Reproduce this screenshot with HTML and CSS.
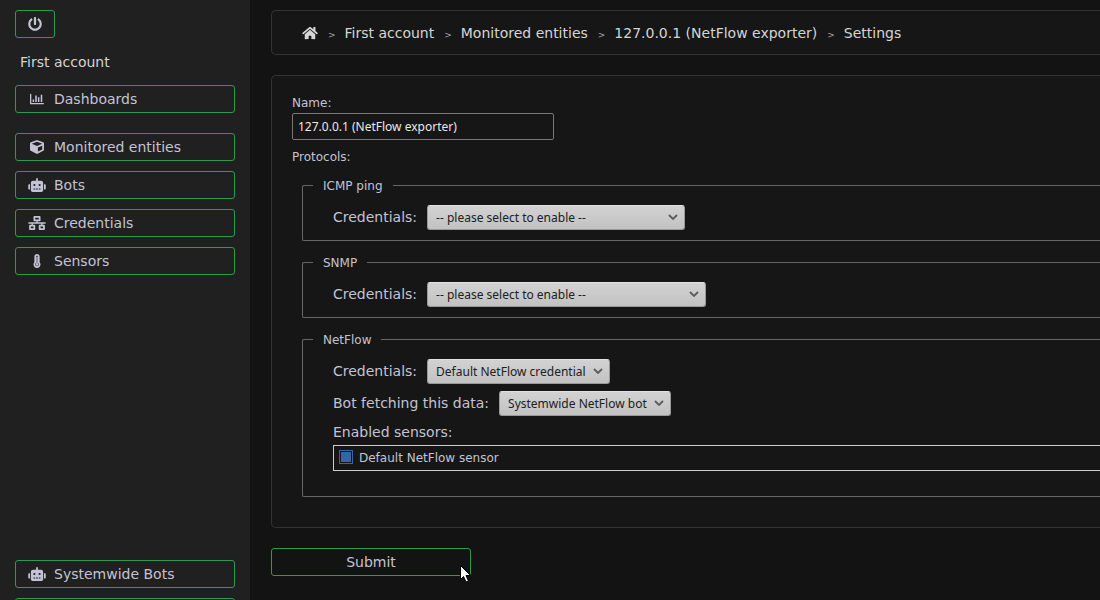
FILE: index.html
```
<!DOCTYPE html>
<html lang="en">
<head>
<meta charset="utf-8">
<title>Settings</title>
<link rel="stylesheet" href="styles.css">
</head>
<body>
<svg class="symbols" aria-hidden="true">
  <symbol id="robot" viewBox="0 0 640 512"><path d="M32,224H64V416H32A32,32,0,0,1,0,384V256A32,32,0,0,1,32,224Zm512-48V448a64,64,0,0,1-64,64H160a64,64,0,0,1-64-64V176a80,80,0,0,1,80-80H288V32a32,32,0,0,1,64,0V96H464A80,80,0,0,1,544,176ZM264,256a40,40,0,1,0-40,40A40,40,0,0,0,264,256Zm-8,128H192v32h64Zm96,0H288v32h64ZM456,256a40,40,0,1,0-40,40A40,40,0,0,0,456,256Zm-8,128H384v32h64ZM640,256V384a32,32,0,0,1-32,32H576V224h32A32,32,0,0,1,640,256Z"/></symbol>
  <symbol id="chevron" viewBox="0 0 10 6"><path d="M1 1l4 4 4-4" fill="none" stroke="#5c5c5c" stroke-width="1.8"/></symbol>
</svg>
<div class="app">
  <aside class="sidebar">
    <button class="button power" type="button"><svg class="icon" viewBox="0 0 512 512"><path d="M400 54.1c63 45 104 118.6 104 201.9 0 136.8-110.8 247.7-247.5 248C120 504.3 8.2 393 8 256.4 7.9 173.1 48.9 99.3 111.8 54.2c11.7-8.3 28-4.8 35 7.7L162.6 90c5.9 10.5 3.1 23.8-6.6 31-41.5 30.8-68 79.6-68 134.9-.1 92.3 74.5 168.1 168 168.1 91.6 0 168.6-74.2 168-169.1-.3-51.8-24.7-101.8-68.1-134-9.7-7.2-12.4-20.5-6.5-30.9l15.8-28.1c7-12.4 23.2-16.1 34.8-7.8zM296 264V24c0-13.3-10.7-24-24-24h-32c-13.3 0-24 10.7-24 24v240c0 13.3 10.7 24 24 24h32c13.3 0 24-10.7 24-24z"/></svg></button>
    <a class="account" href="#">First account</a>
    <nav class="menu">
      <a class="button first" href="#"><svg class="icon" viewBox="0 0 512 512"><path d="M0 80q0-16 16-16h16q16 0 16 16v320h448q16 0 16 16v16q0 16-16 16H32q-32 0-32-32zM96 272h56v96H96zM192 128h56v240h-56zM288 192h56v176h-56zM392 96h56v272h-56z"/></svg>Dashboards</a>
      <a class="button" href="#"><svg class="icon" viewBox="0 0 512 512"><path d="M239.1 6.3l-208 78c-18.7 7-31.1 25-31.1 45v225.1c0 18.2 10.3 34.8 26.5 42.9l208 104c13.5 6.8 29.4 6.8 42.9 0l208-104c16.3-8.1 26.5-24.8 26.5-42.9V129.3c0-20-12.4-37.9-31.1-44.9l-208-78C262 2.2 250 2.2 239.1 6.3zM256 68.4l192 72v1.1l-192 78-192-78v-1.1l192-72zm32 356V275.5l160-65v133.9l-160 80z"/></svg>Monitored entities</a>
      <a class="button" href="#"><svg class="icon"><use href="#robot"/></svg>Bots</a>
      <a class="button" href="#"><svg class="icon" viewBox="0 0 640 512"><path d="M640 264v-16c0-8.84-7.16-16-16-16H344v-40h72c17.67 0 32-14.33 32-32V32c0-17.67-14.33-32-32-32H224c-17.67 0-32 14.33-32 32v128c0 17.67 14.33 32 32 32h72v40H16c-8.84 0-16 7.16-16 16v16c0 8.84 7.16 16 16 16h104v40H64c-17.67 0-32 14.33-32 32v128c0 17.67 14.33 32 32 32h160c17.67 0 32-14.33 32-32V352c0-17.67-14.33-32-32-32h-56v-40h304v40h-56c-17.67 0-32 14.33-32 32v128c0 17.67 14.33 32 32 32h160c17.67 0 32-14.33 32-32V352c0-17.67-14.33-32-32-32h-56v-40h104c8.84 0 16-7.16 16-16zM256 128V64h128v64H256zm-64 320H96v-64h96v64zm352 0h-96v-64h96v64z"/></svg>Credentials</a>
      <a class="button" href="#"><svg class="icon" viewBox="0 0 256 512"><path fill-rule="evenodd" d="M224 96C224 43 181 0 128 0S32 43 32 96v203C12 321 0 351 0 384c0 71 57 128 128 128s128-57 128-128c0-33-12-63-32-85zM128 448c-35 0-64-29-64-64 0-20 12-42 32-60V96a32 32 0 0 1 64 0v228c20 18 32 40 32 60 0 35-29 64-64 64z"/><path d="M104 96h48v242a48 48 0 1 1-48 0z"/></svg>Sensors</a>
    </nav>
    <nav class="menu system">
      <a class="button" href="#"><svg class="icon"><use href="#robot"/></svg>Systemwide Bots</a>
      <a class="button" href="#"></a>
    </nav>
  </aside>
  <main class="content">
    <nav class="panel breadcrumbs">
      <a class="home" href="#"><svg class="home-icon" viewBox="0 0 576 512"><path d="M280.37 148.26L96 300.11V464a16 16 0 0 0 16 16l112.06-.29a16 16 0 0 0 15.92-16V368a16 16 0 0 1 16-16h64a16 16 0 0 1 16 16v95.64a16 16 0 0 0 16 16.05L464 480a16 16 0 0 0 16-16V300L295.67 148.26a12.19 12.19 0 0 0-15.3 0zM571.6 251.47L488 182.56V44.05a12 12 0 0 0-12-12h-56a12 12 0 0 0-12 12v72.61L318.47 43a48 48 0 0 0-61 0L4.34 251.47a12 12 0 0 0-1.6 16.9l25.5 31A12 12 0 0 0 45.15 301l235.22-193.74a12.19 12.19 0 0 1 15.3 0L530.9 301a12 12 0 0 0 16.9-1.6l25.5-31a12 12 0 0 0-1.7-16.93z"/></svg></a>
      <span class="separator">&gt;</span><a href="#">First account</a>
      <span class="separator">&gt;</span><a href="#">Monitored entities</a>
      <span class="separator">&gt;</span><a href="#">127.0.0.1 (NetFlow exporter)</a>
      <span class="separator">&gt;</span><a href="#">Settings</a>
    </nav>
    <form class="settings">
      <div class="panel fields">
        <label class="caption" for="name">Name:</label>
        <input class="text" id="name" type="text" value="127.0.0.1 (NetFlow exporter)">
        <div class="caption protocols">Protocols:</div>
        <fieldset class="group">
          <legend>ICMP ping</legend>
          <div class="row"><label for="icmp">Credentials:</label><span class="picker wide"><select id="icmp"><option>-- please select to enable --</option></select><svg class="chevron"><use href="#chevron"/></svg></span></div>
        </fieldset>
        <fieldset class="group">
          <legend>SNMP</legend>
          <div class="row"><label for="snmp">Credentials:</label><span class="picker wider"><select id="snmp"><option>-- please select to enable --</option></select><svg class="chevron"><use href="#chevron"/></svg></span></div>
        </fieldset>
        <fieldset class="group netflow">
          <legend>NetFlow</legend>
          <div class="row"><label for="netflow">Credentials:</label><span class="picker"><select id="netflow"><option>Default NetFlow credential</option></select><svg class="chevron"><use href="#chevron"/></svg></span></div>
          <div class="row"><label for="bot">Bot fetching this data:</label><span class="picker"><select id="bot"><option>Systemwide NetFlow bot</option></select><svg class="chevron"><use href="#chevron"/></svg></span></div>
          <div class="sensors-title">Enabled sensors:</div>
          <label class="sensor"><input type="checkbox" checked>Default NetFlow sensor</label>
        </fieldset>
      </div>
      <div class="actions">
        <button class="button submit" type="button">Submit</button>
        <svg class="pointer" viewBox="0 0 11 18"><path d="M.5 .5v14l3-3 2.5 5.500 2.500-1-2.500-5.500h4.500z" fill="#fff" stroke="#000"/></svg>
      </div>
    </form>
  </main>
</div>
</body>
</html>
```
FILE: styles.css
```
* { box-sizing: border-box; }
body {
  margin: 0;
  background: #131313;
  color: #c3c3d5;
  font: 14px/20px "DejaVu Sans", sans-serif;
}
a { color: inherit; text-decoration: none; }
.symbols { position: absolute; width: 0; height: 0; }
.app { display: flex; height: 100vh; overflow: hidden; }

.sidebar {
  display: flex;
  flex: none;
  flex-direction: column;
  width: 250px;
  padding: 10px 15px 0;
  background: #202020;
}
.button {
  display: flex;
  align-items: center;
  gap: 8px;
  height: 28px;
  padding: 0 12px;
  border: 1px solid #2a9c4e;
  border-radius: 3px;
  background: transparent;
  color: #c3c3d5;
  font: inherit;
}
.icon { flex: none; width: 18px; height: 14px; fill: currentColor; }
.power { width: 40px; padding: 0 10px; }
.account { margin: 14px 5px 13px; color: #d5d5d5; }
.menu { display: flex; flex-direction: column; gap: 10px; }
.first { margin-bottom: 10px; }
.system { height: 40px; margin-top: auto; overflow: hidden; }
.system .button { flex: none; }

.content { flex: 1; min-width: 0; padding: 10px 0 0 21px; }
.panel {
  border: 1px solid #333;
  border-right: 0;
  border-radius: 5px 0 0 5px;
  background: #161616;
}
.breadcrumbs {
  display: flex;
  align-items: center;
  height: 45px;
  padding-left: 30px;
  color: #d5d5d5;
  white-space: nowrap;
}
.home { display: flex; }
.home-icon { width: 16px; height: 14px; fill: currentColor; }
.separator { padding: 4px 9px 0 10px; color: #a5a5b0; font-size: 9px; line-height: 16px; }
.fields { margin-top: 20px; padding: 19px 0 30px 20px; }
.caption { display: block; margin-bottom: 2px; font-size: 12px; line-height: 16px; }
.text {
  display: block;
  width: 262px;
  height: 27px;
  padding: 0 5px;
  border: 1px solid #777;
  border-radius: 2px;
  background: #161616;
  color: #e8e8e8;
  font: 12px "Noto Sans", sans-serif;
}
.protocols { margin: 9px 0 11px; }
.group {
  min-width: 0;
  margin: 0 0 12px 10px;
  padding: 11px 0 10px 30px;
  border: 1px solid #666;
  border-right: 0;
  border-radius: 2px 0 0 2px;
}
.group legend { margin-left: -20px; padding: 2px 10px 0; font-size: 12px; line-height: 16px; }
.row { display: flex; align-items: center; gap: 10px; }
.row label { padding-bottom: 2px; }
.row + .row { margin-top: 7px; }
.picker { position: relative; display: block; }
.picker select {
  display: block;
  width: 100%;
  height: 25px;
  padding: 0 23px 0 8px;
  border: 1px solid #999;
  border-top-color: #e2e2e2;
  border-radius: 3px;
  appearance: none;
  background: linear-gradient(#d2d2d2, #c2c2c2);
  color: #202020;
  font: 12px "Noto Sans", sans-serif;
}
.wide { width: 258px; }
.wider { width: 279px; }
.chevron { position: absolute; top: 9px; right: 7px; width: 10px; height: 6px; pointer-events: none; }
.netflow { margin-bottom: 0; padding-bottom: 25px; }
.sensors-title { margin: 6px 0 3px; }
.sensor {
  display: flex;
  align-items: center;
  gap: 6px;
  height: 26px;
  padding-left: 5px;
  border: 1px solid #ccc;
  border-right: 0;
  font-size: 12px;
}
.sensor input {
  width: 14px;
  height: 14px;
  margin: 0 0 2px;
  border: 1px solid #3465a4;
  appearance: none;
  padding: 1px;
  background: #3465a4 content-box;
}
.actions { position: relative; width: 200px; margin-top: 20px; }
.submit { justify-content: center; width: 100%; }
.pointer { position: absolute; top: 17px; right: 0; width: 11px; height: 18px; }
```
